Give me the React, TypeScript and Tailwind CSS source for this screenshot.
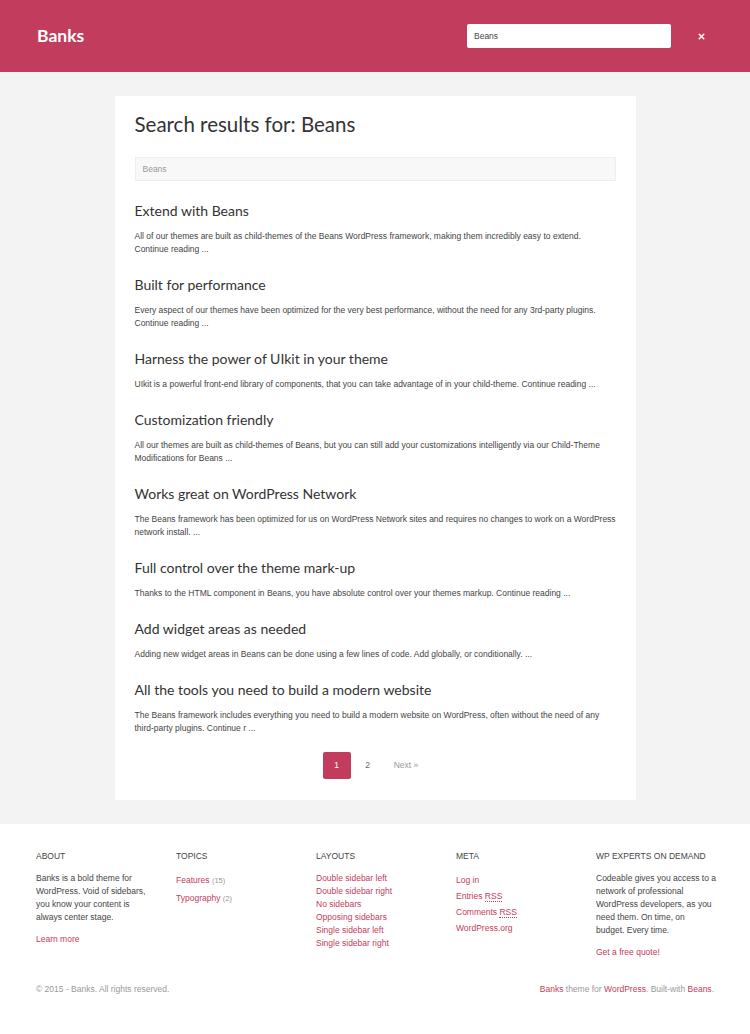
import { X } from "lucide-react";

// lines broken where the original theme breaks them
const posts = [
  {
    title: "Extend with Beans",
    lines: ["All of our themes are built as child-themes of the Beans WordPress framework, making them incredibly easy to extend.", "Continue reading ..."],
  },
  {
    title: "Built for performance",
    lines: ["Every aspect of our themes have been optimized for the very best performance, without the need for any 3rd-party plugins.", "Continue reading ..."],
  },
  {
    title: "Harness the power of UIkit in your theme",
    lines: ["UIkit is a powerful front-end library of components, that you can take advantage of in your child-theme. Continue reading ..."],
  },
  {
    title: "Customization friendly",
    lines: ["All our themes are built as child-themes of Beans, but you can still add your customizations intelligently via our Child-Theme", "Modifications for Beans ..."],
  },
  {
    title: "Works great on WordPress Network",
    lines: ["The Beans framework has been optimized for us on WordPress Network sites and requires no changes to work on a WordPress", "network install. ..."],
  },
  {
    title: "Full control over the theme mark-up",
    lines: ["Thanks to the HTML component in Beans, you have absolute control over your themes markup. Continue reading ..."],
  },
  {
    title: "Add widget areas as needed",
    lines: ["Adding new widget areas in Beans can be done using a few lines of code. Add globally, or conditionally. ..."],
  },
  {
    title: "All the tools you need to build a modern website",
    lines: ["The Beans framework includes everything you need to build a modern website on WordPress, often without the need of any", "third-party plugins. Continue r ..."],
  },
];

const layouts = [
  "Double sidebar left",
  "Double sidebar right",
  "No sidebars",
  "Opposing sidebars",
  "Single sidebar left",
  "Single sidebar right",
];

const heading = "font-['Lato',sans-serif]";
const body = "font-['Liberation_Sans',sans-serif]";

export default function App() {
  return (
    <div className={`min-h-[1034px] flex flex-col bg-[#f3f3f3] ${body}`}>
      <header className="h-[72px] bg-[#c13c5d] flex items-center pl-[37px] pr-[19px]">
        <div className={`${heading} text-white text-[17.5px] font-bold`}>Banks</div>
        <div className="ml-auto flex items-center">
          <div className="w-[204px] h-[24px] bg-white rounded-[2px] flex items-center px-[7px] text-[8.5px] text-[#444]">
            Beans
          </div>
          <div className="w-[60px] flex justify-center">
            <X className="w-[9px] h-[9px] text-white" strokeWidth={4} />
          </div>
        </div>
      </header>

      <main className="pt-6 pb-6">
        <div className="mx-auto w-[521px] bg-white px-5 pt-[12px] pb-[21px] text-[#444]">
          <h1 className={`${heading} text-[20.5px] text-[#333] leading-[32px]`}>Search results for: Beans</h1>
          <div className="mt-[17px] h-[24px] bg-[#f8f8f8] border border-[#eee] flex items-center px-[7px] text-[8.5px] text-[#999]">
            Beans
          </div>
          <div className="mt-[20px]">
            {posts.map((p) => (
              <article key={p.title} className="mb-[19px] last:mb-[17px]">
                <h2 className={`${heading} text-[14px] text-[#333] leading-[20px]`}>{p.title}</h2>
                <p className="mt-[9px] mr-[-6px] text-[8.5px] leading-[13px] text-[#444]">
                  {p.lines.map((l, i) => (
                    <span key={i} className="block">{l}</span>
                  ))}
                </p>
              </article>
            ))}
          </div>
          <div className="mt-[6px] flex items-center justify-center text-[8.5px]">
            <span className="w-[28px] h-[27px] rounded-[2px] bg-[#c13c5d] text-white flex items-center justify-center">1</span>
            <span className="w-[34px] text-center text-[#666]">2</span>
            <span className="pl-[9px] pr-[9px] text-[#999]">Next »</span>
          </div>
        </div>
      </main>

      <footer className="flex-1 bg-white px-9 pt-[26px] pb-[36px] text-[8.5px] text-[#444]">
        <div className="grid grid-cols-5 gap-x-5 w-[680px]">
          <div>
            <h3 className="uppercase leading-[13px]">About</h3>
            <p className="mt-[9px] leading-[13px] w-[112px]">Banks is a bold theme for WordPress. Void of sidebars, you know your content is always center stage.</p>
            <a className="block mt-[9px] text-[#c13c5d]">Learn more</a>
          </div>
          <div>
            <h3 className="uppercase leading-[13px]">Topics</h3>
            <div className="mt-[9px] leading-[16px]">
              <div><a className="text-[#c13c5d]">Features</a> <span className="text-[#999] text-[7.5px]">(15)</span></div>
              <div className="mt-[1px]"><a className="text-[#c13c5d]">Typography</a> <span className="text-[#999] text-[7.5px]">(2)</span></div>
            </div>
          </div>
          <div>
            <h3 className="uppercase leading-[13px]">Layouts</h3>
            <ul className="mt-[9px] leading-[13px]">
              {layouts.map((l) => (
                <li key={l} className="text-[#c13c5d]">{l}</li>
              ))}
            </ul>
          </div>
          <div>
            <h3 className="uppercase leading-[13px]">Meta</h3>
            <ul className="mt-[9px] leading-[16px] text-[#c13c5d]">
              <li>Log in</li>
              <li>Entries <span className="border-b border-dotted border-[#c13c5d]">RSS</span></li>
              <li>Comments <span className="border-b border-dotted border-[#c13c5d]">RSS</span></li>
              <li>WordPress.org</li>
            </ul>
          </div>
          <div>
            <h3 className="uppercase leading-[13px]">WP Experts on demand</h3>
            <p className="mt-[9px] leading-[13px] whitespace-nowrap">
              Codeable gives you access to a<br />
              network of professional<br />
              WordPress developers, as you<br />
              need them. On time, on<br />
              budget. Every time.
            </p>
            <a className="block mt-[9px] text-[#c13c5d]">Get a free quote!</a>
          </div>
        </div>
        <div className="mt-[24px] flex justify-between w-[678px] text-[#999]">
          <span>© 2015 - Banks. All rights reserved.</span>
          <span>
            <a className="text-[#c13c5d]">Banks</a> theme for <a className="text-[#c13c5d]">WordPress</a>. Built-with <a className="text-[#c13c5d]">Beans</a>.
          </span>
        </div>
      </footer>
    </div>
  );
}
